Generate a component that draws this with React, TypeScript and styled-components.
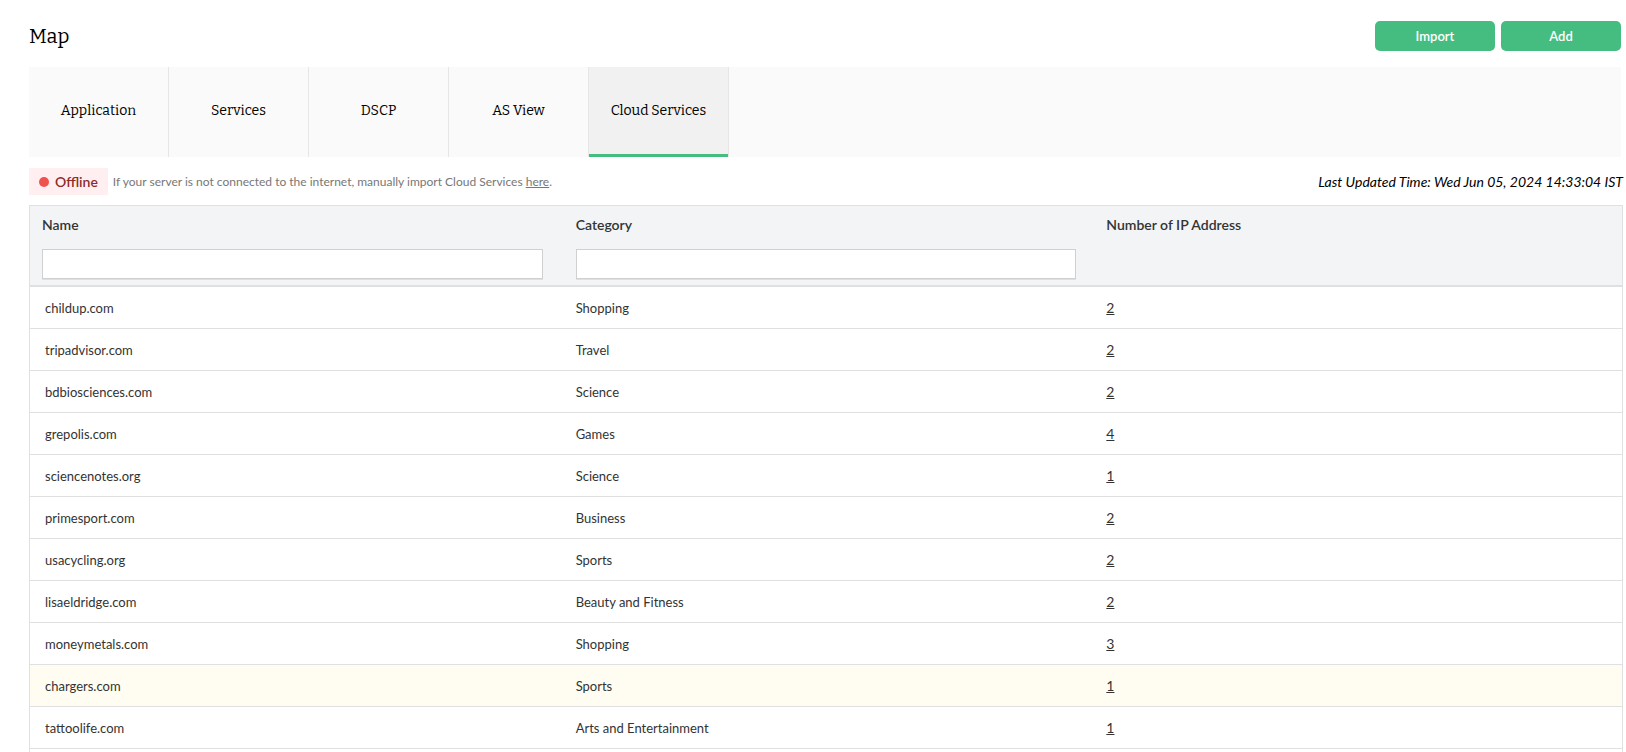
import React, { useState } from "react";
import styled, { createGlobalStyle } from "styled-components";

const slab = `"Bitter", "DejaVu Serif Condensed", "DejaVu Serif", serif`;

const GlobalStyle = createGlobalStyle`
  *, *::before, *::after { box-sizing: border-box; }
  body {
    margin: 0;
    background: #fff;
    color: #000;
    font-family: Lato, "Open Sans", sans-serif;
    font-size: 14px;
    line-height: 18px;
  }
  button, input { font: inherit; }
`;

const Page = styled.main`
  display: flex;
  flex-direction: column;
  min-height: 100vh;
  padding: 21px 3px 0 29px;
`;

const Header = styled.header`
  display: flex;
  align-items: center;
  justify-content: space-between;
  margin-right: 2px;
`;

const Title = styled.h1`
  margin: 0;
  font-family: ${slab};
  font-size: 20px;
  font-weight: 400;
  line-height: 28px;
`;

const Actions = styled.div`
  display: flex;
  gap: 6px;
`;

const ActionButton = styled.button`
  width: 120px;
  height: 30px;
  padding: 0;
  border: 0;
  border-radius: 5px;
  background: #46bd80;
  color: #fff;
  font-size: 13px;
  font-weight: 600;
  cursor: pointer;
`;

const Tabs = styled.div`
  display: flex;
  height: 90px;
  margin: 16px 2px 0 0;
  background: #fafafa;
`;

const Tab = styled.button<{ $active: boolean }>`
  display: flex;
  align-items: center;
  justify-content: center;
  width: 140px;
  padding: 0 0 2px;
  border: 0;
  border-right: 1px solid #e6e6e6;
  background: ${(p) => (p.$active ? "#f1f1f1" : "transparent")};
  box-shadow: ${(p) => (p.$active ? "inset 0 -3px #46bd80" : "none")};
  color: #000;
  font-family: ${slab};
  font-size: 14px;
  cursor: pointer;
`;

const StatusBar = styled.div`
  display: flex;
  align-items: center;
  margin: 11px 0 10px;
`;

const Badge = styled.span`
  display: flex;
  align-items: center;
  gap: 6px;
  height: 27px;
  padding: 0 10px;
  background: #ffeff0;
  color: #8f2a2c;
  font-weight: 600;
`;

const Dot = styled.span`
  width: 10px;
  height: 10px;
  border-radius: 50%;
  background: #ef5350;
`;

const Hint = styled.p`
  margin: 0 0 0 5px;
  color: #777;
  font-size: 12px;
`;

const HintLink = styled.a`
  color: inherit;
`;

const Updated = styled.em`
  margin-left: auto;
`;

const TableFrame = styled.div`
  flex: 1;
  border: solid #e0e0e0;
  border-width: 1px 1px 0;
`;

const Table = styled.table`
  width: 100%;
  table-layout: fixed;
  border-collapse: separate;
  border-spacing: 0;
  color: #333;
`;

const HeadCell = styled.th`
  height: 81px;
  padding: 10px 15px 6px;
  border-bottom: 2px solid #e0e0e0;
  background: #f3f4f6;
  font-weight: 600;
  text-align: left;
  vertical-align: top;

  &:first-child { padding: 10px 18px 6px 12px; }
`;

const Filter = styled.input`
  display: block;
  width: 100%;
  height: 30px;
  margin-top: 15px;
  padding: 0 8px;
  border: 1px solid #d0d0d0;
  border-radius: 0;
  background: #fff;
  box-shadow: 0 1px #dedfe0;
`;

const Row = styled.tr<{ $highlighted?: boolean }>`
  background: ${(p) => (p.$highlighted ? "#fffdf2" : "#fff")};
`;

const Cell = styled.td`
  height: 42px;
  padding: 0 15px;
  border-bottom: 1px solid #e0e0e0;
  font-size: 13px;
`;

const CountLink = styled.a`
  color: inherit;
  font-size: 14px;
`;

const tabs = ["Application", "Services", "DSCP", "AS View", "Cloud Services"];

const services: [string, string, number][] = [
  ["childup.com", "Shopping", 2],
  ["tripadvisor.com", "Travel", 2],
  ["bdbiosciences.com", "Science", 2],
  ["grepolis.com", "Games", 4],
  ["sciencenotes.org", "Science", 1],
  ["primesport.com", "Business", 2],
  ["usacycling.org", "Sports", 2],
  ["lisaeldridge.com", "Beauty and Fitness", 2],
  ["moneymetals.com", "Shopping", 3],
  ["chargers.com", "Sports", 1],
  ["tattoolife.com", "Arts and Entertainment", 1],
];

export default function App() {
  const [active, setActive] = useState("Cloud Services");

  return (
    <>
      <GlobalStyle />
      <Page>
        <Header>
          <Title>Map</Title>
          <Actions>
            <ActionButton type="button">Import</ActionButton>
            <ActionButton type="button">Add</ActionButton>
          </Actions>
        </Header>

        <Tabs role="tablist">
          {tabs.map((tab) => (
            <Tab
              key={tab}
              type="button"
              role="tab"
              aria-selected={tab === active}
              $active={tab === active}
              onClick={() => setActive(tab)}
            >
              {tab}
            </Tab>
          ))}
        </Tabs>

        <StatusBar>
          <Badge>
            <Dot />
            Offline
          </Badge>
          <Hint>
            If your server is not connected to the internet, manually import Cloud Services{" "}
            <HintLink href="#import">here</HintLink>.
          </Hint>
          <Updated>Last Updated Time: Wed Jun 05, 2024 14:33:04 IST</Updated>
        </StatusBar>

        <TableFrame>
          <Table>
            <thead>
              <tr>
                <HeadCell scope="col">
                  <label htmlFor="filter-name">Name</label>
                  <Filter id="filter-name" type="text" />
                </HeadCell>
                <HeadCell scope="col">
                  <label htmlFor="filter-category">Category</label>
                  <Filter id="filter-category" type="text" />
                </HeadCell>
                <HeadCell scope="col">Number of IP Address</HeadCell>
              </tr>
            </thead>
            <tbody>
              {services.map(([name, category, count]) => (
                <Row key={name} $highlighted={name === "chargers.com"}>
                  <Cell>{name}</Cell>
                  <Cell>{category}</Cell>
                  <Cell>
                    <CountLink href={`#${name}`}>{count}</CountLink>
                  </Cell>
                </Row>
              ))}
            </tbody>
          </Table>
        </TableFrame>
      </Page>
    </>
  );
}
